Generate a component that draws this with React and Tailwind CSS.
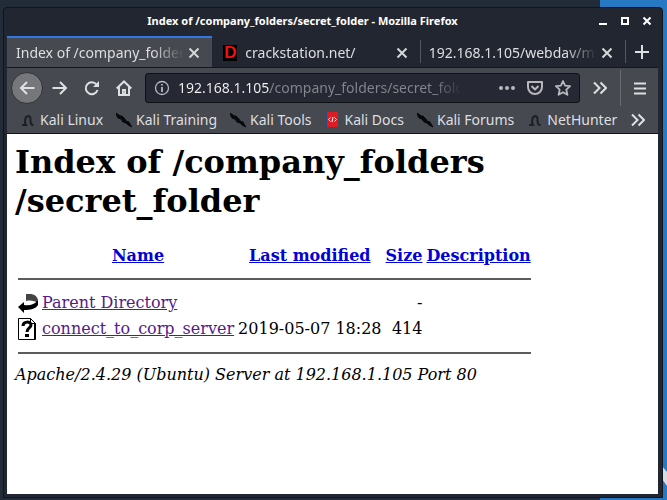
import React from "react";

const stroke = { fill: "none", stroke: "currentColor", strokeWidth: 2 };

function Close() {
  return (
    <svg width="12" height="12" viewBox="0 0 12 12" {...stroke}>
      <path d="M1.500 1.500l9 9M10.500 1.500l-9 9" />
    </svg>
  );
}

function Chevrons() {
  return (
    <svg width="14" height="14" viewBox="0 0 14 14" {...stroke}>
      <path d="M1 1.500L6.500 7L1 12.500M7.500 1.500L13 7l-5.500 5.500" />
    </svg>
  );
}

function Dragon() {
  return (
    <svg width="16" height="16" viewBox="0 0 16 16">
      <path d="M0 1l3 2 1 1 2 0 3 3 1 2 3 1 1 2 2 3-4-2-2-2-3-1-2-3-3-1-1-2z" fill="#08090b" stroke="#08090b" />
    </svg>
  );
}

function Serpent() {
  return (
    <svg width="16" height="16" viewBox="0 0 16 16">
      <path d="M2 13h4C4 10 5 5 8 4c3 0 2.500 3 2.500 5 0 2 1 4 3 4M5 6l3-2" fill="none" stroke="#1d1f24" strokeWidth="2" />
    </svg>
  );
}

function Docs() {
  return (
    <svg width="16" height="16" viewBox="0 0 16 16">
      <path d="M2 0h12v15H2z" fill="#dc1d25" />
      <path d="M2 0h1v15H2z" fill="#294a80" />
      <path d="M6.500 5.500L4.500 7.500l2 2M10.500 5.500l2 2-2 2M9 5L8 10" fill="none" stroke="#fff" />
    </svg>
  );
}

function Tab({ title, icon, active, className }) {
  return (
    <div className={`flex min-w-0 items-center border-t-2 pr-3 ${active ? "border-[#3478e5] bg-[#46494f]" : "border-transparent"} ${className}`}>
      <button role="tab" aria-selected={!!active} className="flex min-w-0 flex-1 items-center gap-2 text-left">
        {icon}
        <span className="min-w-0 flex-1 overflow-hidden whitespace-nowrap [mask-image:linear-gradient(to_left,transparent,black_32px)]">{title}</span>
      </button>
      <button aria-label="Close tab" className="ml-1 text-[#d5d6d8]"><Close /></button>
    </div>
  );
}

function TitleBar() {
  return (
    <header className="flex h-7 items-center pb-0.5 text-white">
      <h2 className="min-w-0 flex-1 text-center text-[11px] font-bold">Index of /company_folders/secret_folder - Mozilla Firefox</h2>
      <div className="flex gap-3 pr-1.5">
        <button aria-label="Minimize"><svg width="10" height="10"><path d="M1 7h8v2H1z" fill="#fff" /></svg></button>
        <button aria-label="Maximize"><svg width="10" height="10"><path d="M2 2h6v6H2z" {...stroke} /></svg></button>
        <button aria-label="Close window"><svg width="10" height="10"><path d="M1.500 1.500l7 7M8.500 1.500l-7 7" {...stroke} /></svg></button>
      </div>
    </header>
  );
}

function TabBar() {
  return (
    <div role="tablist" className="flex h-8 border-b border-[#15161b] text-sm text-[#dedfe1]">
      <Tab active title="Index of /company_folders" className="flex-1 pl-[9px]" />
      <Tab
        title="crackstation.net/"
        className="flex-1 pl-[11px]"
        icon={
          <span className="flex h-4 w-3.5 items-center justify-center bg-black font-['Liberation_Sans'] text-[17px] leading-4 font-bold text-[#f01010]">D</span>
        }
      />
      <span className="my-1 w-px bg-[#55575e]" />
      <Tab title="192.168.1.105/webdav/ms" className="flex-1 pl-2" />
      <span className="my-1 w-px bg-[#55575e]" />
      <button aria-label="New tab" className="flex w-8 items-center justify-center">
        <svg width="14" height="14" {...stroke}><path d="M7 0v14M0 7h14" /></svg>
      </button>
    </div>
  );
}

function NavBar() {
  return (
    <nav className="flex h-10 items-center bg-[#46494f] pl-1 text-[#dedfe1]">
      <button aria-label="Back" className="mr-px flex size-8 items-center justify-center rounded-full border border-[#2f3238] bg-[#76777a]">
        <svg width="16" height="14" {...stroke}><path d="M15.500 7H2M8 1L2 7l6 6" /></svg>
      </button>
      <button aria-label="Forward" className="flex size-8 items-center justify-center">
        <svg width="16" height="14" {...stroke}><path d="M.5 7H14M8 1l6 6-6 6" /></svg>
      </button>
      <button aria-label="Reload" className="flex size-8 items-center justify-center">
        <svg width="16" height="16" {...stroke}>
          <path d="M12.500 4.500A6 6 0 1 0 13.500 10" />
          <path d="M15 1v6H9z" fill="currentColor" stroke="none" />
        </svg>
      </button>
      <button aria-label="Home" className="flex size-8 items-center justify-center">
        <svg width="16" height="16" {...stroke}>
          <path d="M.7 8.500L8 1.500l7.300 7M3 7v8h10V7" />
          <path d="M6 9h4v6H6z" fill="currentColor" stroke="none" />
          <path d="M7.500 11.500h1v1h-1z" fill="#46494f" stroke="none" />
        </svg>
      </button>
      <div className="ml-[5px] flex h-[30px] min-w-0 flex-1 items-center rounded-[3px] border border-[#111217] bg-[#262833] px-2 text-[#b8b9bd]">
        <button aria-label="Site information">
          <svg width="16" height="16" fill="none" stroke="currentColor">
            <circle cx="8" cy="8" r="6.500" strokeWidth="1.300" />
            <path d="M8 7v5M8 4v1.600" strokeWidth="1.800" />
          </svg>
        </button>
        <input
          aria-label="Address"
          readOnly
          value="192.168.1.105/company_folders/secret_folder/"
          className="ml-2 min-w-0 flex-1 bg-[linear-gradient(to_right,#f4f4f5_92px,#85868d_92px,#85868d_256px,#262833_284px)] bg-clip-text text-sm text-transparent outline-none"
        />
        <div className="ml-9 flex gap-3">
          <button aria-label="Page actions">
            <svg width="16" height="16" fill="currentColor"><circle cx="2" cy="8" r="2" /><circle cx="8" cy="8" r="2" /><circle cx="14" cy="8" r="2" /></svg>
          </button>
          <button aria-label="Save to Pocket">
            <svg width="16" height="16" {...stroke}><path d="M1 2h14v5a7 7 0 0 1-14 0zM4.500 6L8 9.500 11.500 6" strokeLinejoin="round" /></svg>
          </button>
          <button aria-label="Bookmark this page">
            <svg width="16" height="16" fill="none" stroke="currentColor" strokeWidth="1.800" strokeLinejoin="round">
              <path d="M8 1l2.100 4.700 5 .5-3.800 3.500 1.100 5.100L8 12.200l-4.400 2.600 1.100-5.100L.9 6.200l5-.5z" />
            </svg>
          </button>
        </div>
      </div>
      <button aria-label="More tools" className="flex w-10 items-center justify-center"><Chevrons /></button>
      <span className="h-9 w-px bg-[#686a70]" />
      <button aria-label="Open menu" className="flex w-[37px] items-center justify-center">
        <svg width="12" height="13" {...stroke}><path d="M0 1.500h12M0 6.500h12M0 11.500h12" /></svg>
      </button>
    </nav>
  );
}

const bookmarks = [
  ["Kali Linux", Serpent],
  ["Kali Training", Dragon],
  ["Kali Tools", Dragon],
  ["Kali Docs", Docs],
  ["Kali Forums", Dragon],
  ["NetHunter", Serpent],
];

function Bookmarks() {
  return (
    <div className="flex h-[26px] items-center border-b border-[#111217] bg-[#46494f] pr-[13px] pb-0.5 pl-[13px] text-sm text-[#dedfe1]">
      <div className="flex min-w-0 flex-1 gap-[13px]">
        {bookmarks.map(([name, Icon]) => (
          <a key={name} href="#" className="flex shrink-0 items-center gap-1 whitespace-nowrap"><Icon />{name}</a>
        ))}
      </div>
      <button aria-label="More bookmarks"><Chevrons /></button>
    </div>
  );
}

function ParentIcon() {
  return (
    <svg width="20" height="22" viewBox="0 0 20 22" className="block">
      <path d="M8 2h4c4 0 7 2 8 6v3c-3-2-7-3-12-2z" fill="#444" />
      <path d="M0 15l6-5v3c6 1 11-1 13-4h1v4c-2 4-8 5-14 5v3z" fill="#000" />
    </svg>
  );
}

function UnknownIcon() {
  return (
    <svg width="20" height="22" viewBox="0 0 20 22" className="block">
      <path d="M.5.500h12l5 5v16H.5z" fill="#fff" stroke="#000" />
      <path d="M12.500.500v5h5" fill="none" stroke="#000" />
      <path d="M17 6v15" stroke="#000" strokeWidth="2" />
      <path d="M5 8c0-5 8-5 8-1 0 3-4 3-4 7" fill="none" stroke="#000" strokeWidth="3" />
      <path d="M7 16h4v3H7z" />
    </svg>
  );
}

function Rule() {
  return (
    <tr>
      <td colSpan={5}><hr className="my-2 border-t-2 border-[#5c5c5c]" /></td>
    </tr>
  );
}

function Listing() {
  return (
    <main className="flex-1 bg-white px-2 pt-[9px] font-['DejaVu_Serif',serif] text-base leading-5 text-black">
      <h1 className="text-[32px] leading-[39px] font-bold">Index of /company_folders<wbr />/secret_folder</h1>
      <table className="mt-[22px] border-separate border-spacing-[2px] whitespace-nowrap [&_td]:p-px [&_th]:p-px">
        <thead>
          <tr className="text-[#0000d8] underline">
            <th><span className="block w-5" /></th>
            <th><a href="#">Name</a></th>
            <th><a href="#">Last modified</a></th>
            <th><a href="#">Size</a></th>
            <th><a href="#">Description</a></th>
          </tr>
        </thead>
        <tbody>
          <Rule />
          <tr>
            <td><ParentIcon /></td>
            <td><a href="#" className="text-[#551a8b] underline">Parent Directory</a></td>
            <td />
            <td className="text-right">-</td>
            <td />
          </tr>
          <tr>
            <td><UnknownIcon /></td>
            <td><a href="#" className="text-[#551a8b] underline">connect_to_corp_server</a></td>
            <td className="text-right">2019-05-07 18:28</td>
            <td className="text-right">414</td>
            <td />
          </tr>
          <Rule />
        </tbody>
      </table>
      <address className="italic">Apache/2.4.29 (Ubuntu) Server at 192.168.1.105 Port 80</address>
    </main>
  );
}

export default function App() {
  return (
    <div className="relative flex min-h-screen flex-col bg-[linear-gradient(to_right,#222b38_90%,#2879c4_90%)] pt-[7px] pr-1 pb-0.5 pl-[3px] font-['Noto_Sans',sans-serif]">
      <svg className="absolute right-0 bottom-3.5" width="5" height="20"><path d="M0 0l5 6v14L0 13z" fill="#d8dde2" /></svg>
      <div className="relative flex flex-1 flex-col rounded-t-[4px] border border-[#11141b] bg-[#222630] pr-1 pb-[3px] pl-[3px]">
        <TitleBar />
        <TabBar />
        <NavBar />
        <Bookmarks />
        <Listing />
      </div>
    </div>
  );
}
